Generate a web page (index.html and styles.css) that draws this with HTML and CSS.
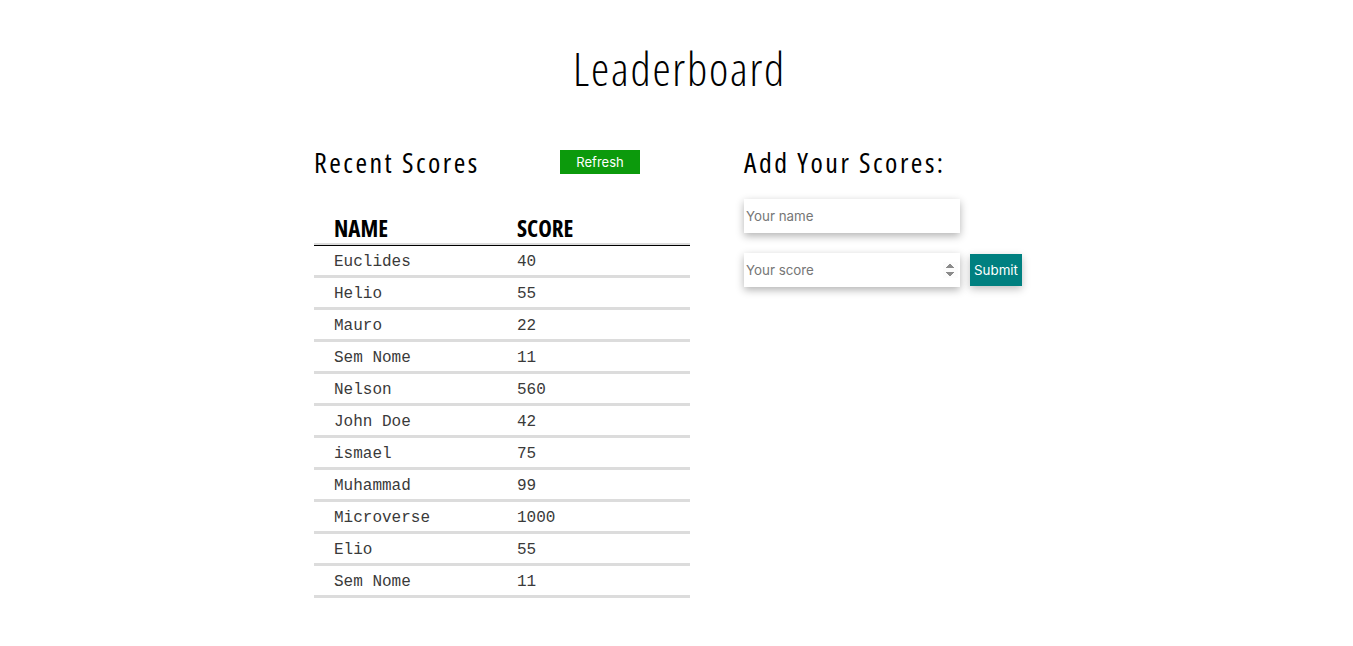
FILE: index.html
```html
<!DOCTYPE html>
<html lang="en">
<head>
<meta charset="utf-8">
<title>Leaderboard</title>
<link rel="stylesheet" href="styles.css">
</head>
<body>
<h1 class="title">Leaderboard</h1>
<main class="board">
  <section class="recent">
    <div class="recent-head">
      <h2 class="sub">Recent Scores</h2>
      <button class="refresh" type="button">Refresh</button>
    </div>
    <table class="scores">
      <thead>
        <tr><th>Name</th><th>Score</th></tr>
      </thead>
      <tbody>
        <tr><td>Euclides</td><td>40</td></tr>
        <tr><td>Helio</td><td>55</td></tr>
        <tr><td>Mauro</td><td>22</td></tr>
        <tr><td>Sem Nome</td><td>11</td></tr>
        <tr><td>Nelson</td><td>560</td></tr>
        <tr><td>John Doe</td><td>42</td></tr>
        <tr><td>ismael</td><td>75</td></tr>
        <tr><td>Muhammad</td><td>99</td></tr>
        <tr><td>Microverse</td><td>1000</td></tr>
        <tr><td>Elio</td><td>55</td></tr>
        <tr><td>Sem Nome</td><td>11</td></tr>
      </tbody>
    </table>
  </section>
  <section class="add">
    <h2 class="sub">Add Your Scores:</h2>
    <form class="add-form">
      <input class="field" type="text" placeholder="Your name">
      <div class="score-row">
        <input class="field" type="number" placeholder="Your score">
        <button class="submit" type="button">Submit</button>
      </div>
    </form>
  </section>
</main>
</body>
</html>
```
FILE: styles.css
```css
body {
  margin: 0;
  background: #fff;
  color: #000;
}

.title {
  margin: 45px 0 0;
  padding-left: 6px;
  text-align: center;
  font-family: "Open Sans", sans-serif;
  font-stretch: 75%;
  font-weight: 350;
  font-size: 46px;
  line-height: 46px;
  letter-spacing: 1.8px;
}

.board {
  display: flex;
  justify-content: center;
  gap: 54px;
  margin-top: 59px;
}

.recent {
  width: 376px;
}

.add {
  width: 295px;
}

.recent-head {
  display: grid;
  grid-template-columns: 246px 80px;
  align-items: start;
}

.sub {
  margin: 0;
  font-family: "Open Sans", sans-serif;
  font-stretch: 75%;
  font-weight: 400;
  font-size: 28px;
  line-height: 24px;
  letter-spacing: 2.5px;
}

.refresh {
  width: 80px;
  height: 24px;
  border: 0;
  padding: 0;
  background: #0c9a0c;
  color: #fff;
  font-family: Inter, sans-serif;
  font-size: 13px;
}

.scores {
  width: 376px;
  margin-top: 34px;
  border-collapse: separate;
  border-spacing: 0;
}

.scores th {
  text-align: left;
  padding: 9px 20px 6px;
  font-family: "Open Sans", sans-serif;
  font-stretch: 75%;
  font-weight: 700;
  font-size: 23px;
  line-height: 22px;
  letter-spacing: 0;
  text-transform: uppercase;
  border-bottom: 1px solid #000;
  box-shadow: inset 0 -2px 0 #dcdcdc;
}

.scores th:first-child,
.scores td:first-child {
  width: 143px;
}

.scores td {
  padding: 3px 20px 0;
  height: 26px;
  line-height: 26px;
  font-family: "Liberation Mono", monospace;
  font-size: 16px;
  color: #3a3a3a;
  border-bottom: 3px solid #dcdcdc;
}

.add-form {
  margin-top: 25px;
  display: flex;
  flex-direction: column;
  gap: 20px;
}

.field {
  box-sizing: border-box;
  width: 216px;
  height: 34px;
  border: 0;
  padding: 0 2px;
  font-family: Inter, sans-serif;
  font-size: 13.33px;
  color: #222;
  background: #fff;
  box-shadow: 0 3px 8px rgba(0, 0, 0, 0.3);
  outline: none;
}

.field::placeholder {
  color: #767676;
}

.field::-webkit-inner-spin-button {
  opacity: 1;
}

.score-row {
  display: flex;
  align-items: center;
  gap: 10px;
}

.submit {
  width: 52px;
  height: 32px;
  border: 0;
  padding: 0;
  background: #008080;
  color: #fff;
  font-family: Inter, sans-serif;
  font-size: 13.33px;
  box-shadow: 0 3px 8px rgba(0, 0, 0, 0.25);
}
```
